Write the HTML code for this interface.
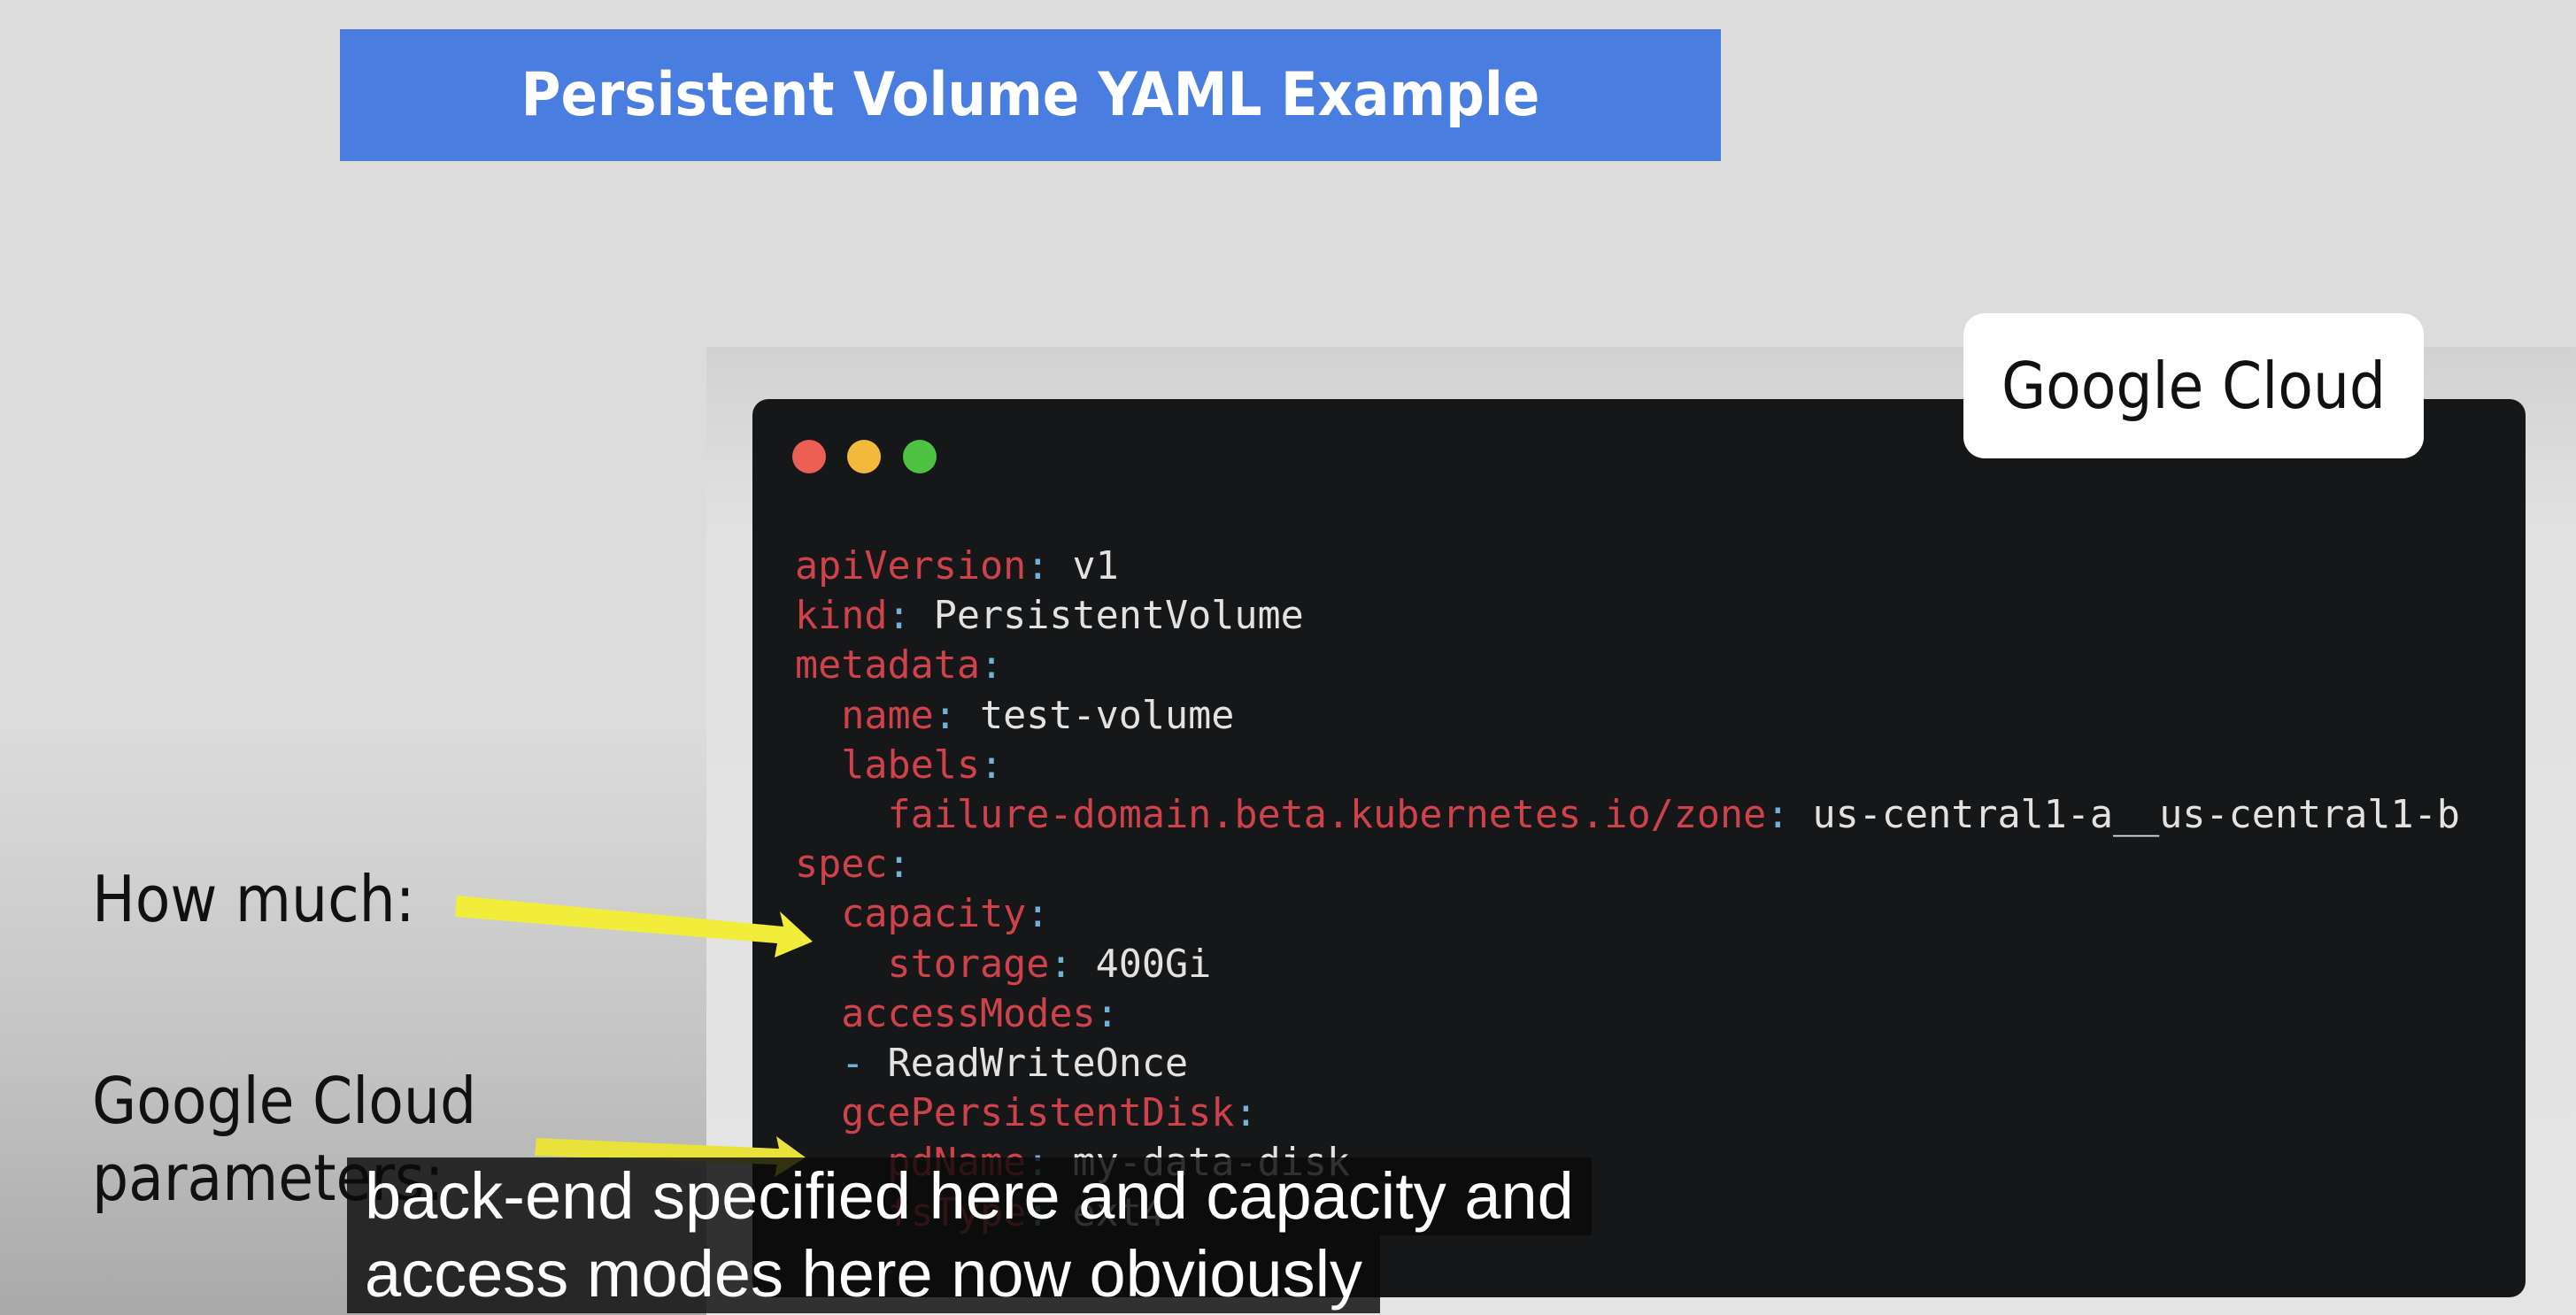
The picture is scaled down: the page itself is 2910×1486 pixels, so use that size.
<!DOCTYPE html>
<html><head><meta charset="utf-8"><style>
html,body{margin:0;padding:0}
body{width:2910px;height:1486px;position:relative;overflow:hidden;
background:linear-gradient(180deg,#dcdcdc 0%,#dcdcdc 55%,#c4c4c4 80%,#a9a9a9 100%);
font-family:"Liberation Sans","DejaVu Sans",sans-serif}
.panel{position:absolute;left:798px;top:392px;width:2112px;height:1094px;background:linear-gradient(180deg,#d2d2d2 0%,#e2e2e2 20%,#e4e4e4 100%)}
.title{position:absolute;left:384px;top:33px;width:1560px;height:149px;background:#4a7de0;color:#fff;
font-family:"DejaVu Sans Condensed","DejaVu Sans",sans-serif;font-weight:bold;font-size:68px;line-height:149px;text-align:center}
.win{position:absolute;left:850px;top:451px;width:2003px;height:1015px;background:#161718;border-radius:18px}
.dot{position:absolute;top:497px;width:38px;height:38px;border-radius:50%}
.badge{position:absolute;left:2218px;top:354px;width:520px;height:164px;background:#fff;border-radius:24px;
font-family:"DejaVu Sans Condensed","DejaVu Sans",sans-serif;font-size:72px;line-height:164px;text-align:center;color:#111}
.code{position:absolute;left:898px;top:612px;font-family:"DejaVu Sans Mono","Liberation Mono",monospace;font-size:43.4px;line-height:56.2px;white-space:pre;color:#e2e2e2}
.k{color:#d0424b}.c{color:#6fb3d8}
.lbl{position:absolute;left:104px;font-family:"DejaVu Sans Condensed","DejaVu Sans",sans-serif;font-size:72px;color:#111;line-height:88px}
.cap{position:absolute;left:392px;background:rgba(10,10,10,.82);color:#fff;font-size:74px;line-height:88px;padding:0 20px;white-space:nowrap;font-family:"Liberation Sans Narrow","Liberation Sans",sans-serif}
</style></head><body>
<div class="panel"></div>
<div class="title">Persistent Volume YAML Example</div>
<div class="win"></div>
<div class="dot" style="left:895px;background:#ec5f55"></div>
<div class="dot" style="left:957px;background:#f2b93b"></div>
<div class="dot" style="left:1020px;background:#4ec343"></div>
<div class="badge">Google Cloud</div>
<div class="code"><span class="k">apiVersion</span><span class="c">:</span> v1
<span class="k">kind</span><span class="c">:</span> PersistentVolume
<span class="k">metadata</span><span class="c">:</span>
  <span class="k">name</span><span class="c">:</span> test-volume
  <span class="k">labels</span><span class="c">:</span>
    <span class="k">failure-domain.beta.kubernetes.io/zone</span><span class="c">:</span> us-central1-a__us-central1-b
<span class="k">spec</span><span class="c">:</span>
  <span class="k">capacity</span><span class="c">:</span>
    <span class="k">storage</span><span class="c">:</span> 400Gi
  <span class="k">accessModes</span><span class="c">:</span>
  <span class="c">-</span> ReadWriteOnce
  <span class="k">gcePersistentDisk</span><span class="c">:</span>
    <span class="k">pdName</span><span class="c">:</span> my-data-disk
    <span class="k">fsType</span><span class="c">:</span> ext4</div>
<div class="lbl" style="top:972px">How much:</div>
<div class="lbl" style="top:1200px">Google Cloud</div>
<div class="lbl" style="top:1287px">parameters:</div>
<svg style="position:absolute;left:0;top:0" width="2910" height="1486">
<polygon points="516,1012 885,1047 881,1030 918,1064 875,1082 878,1066 514,1036" fill="#f2ec3a"/>
<polygon points="606,1286 880,1298 877,1284 910,1308 875,1330 878,1316 604,1306" fill="#e8e23a"/>
</svg>
<div class="cap" style="top:1308px">back-end specified here and capacity and</div>
<div class="cap" style="top:1396px">access modes here now obviously</div>
</body></html>
